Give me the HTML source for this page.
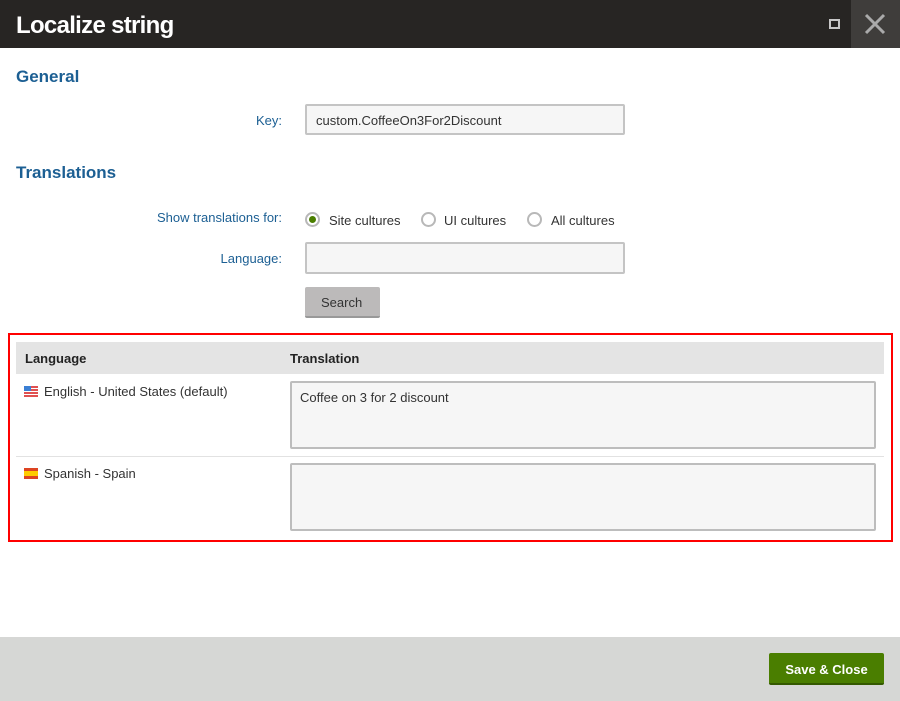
<!DOCTYPE html>
<html><head><meta charset="utf-8"><style>
*{margin:0;padding:0;box-sizing:border-box}
body{width:900px;height:701px;position:relative;background:#fff;font-family:"Liberation Sans",sans-serif;font-size:13px;color:#333;overflow:hidden}
.a{position:absolute}
.hdr{left:0;top:0;width:900px;height:48px;background:#272523}
.title{left:16px;top:12px;color:#fff;font-size:24px;font-weight:bold;letter-spacing:-0.7px}
.cls{left:851px;top:0;width:49px;height:48px;background:#3f3d3b}
.h2{color:#1c5f93;font-size:17px;font-weight:bold}
.lbl{color:#1c5f93;font-size:13px;text-align:right;width:200px}
.inp{background:#f6f6f6;border:2px solid #c4c4c4;border-radius:2px}
.rad{width:15px;height:15px;border:2px solid #b8b8b8;border-radius:50%;background:#fff}
.txt{font-size:13px;color:#333}
</style></head><body>
<div class="a hdr"></div>
<div class="a title">Localize string</div>
<div class="a" style="left:829px;top:19px;width:11px;height:10px;border:2px solid #c8c8c8"></div>
<div class="a cls"></div>
<svg class="a" style="left:864px;top:13px" width="22" height="22"><path d="M2 2L20 20M20 2L2 20" stroke="#aaa" stroke-width="3"/></svg>

<div class="a h2" style="left:16px;top:67px">General</div>
<div class="a lbl" style="left:82px;top:113px">Key:</div>
<div class="a inp" style="left:305px;top:104px;width:320px;height:31px"></div>
<div class="a txt" style="left:316px;top:113px">custom.CoffeeOn3For2Discount</div>

<div class="a h2" style="left:16px;top:163px">Translations</div>
<div class="a lbl" style="left:82px;top:210px">Show translations for:</div>
<div class="a rad" style="left:305px;top:212px"></div>
<div class="a" style="left:309px;top:216px;width:7px;height:7px;border-radius:50%;background:#4a7e00"></div>
<div class="a txt" style="left:329px;top:213px">Site cultures</div>
<div class="a rad" style="left:421px;top:212px"></div>
<div class="a txt" style="left:444px;top:213px">UI cultures</div>
<div class="a rad" style="left:527px;top:212px"></div>
<div class="a txt" style="left:551px;top:213px">All cultures</div>
<div class="a lbl" style="left:82px;top:251px">Language:</div>
<div class="a inp" style="left:305px;top:242px;width:320px;height:32px"></div>
<div class="a" style="left:305px;top:287px;width:75px;height:31px;background:#bcbaba;border-bottom:2px solid #999;border-radius:2px"></div>
<div class="a txt" style="left:321px;top:295px">Search</div>

<div class="a" style="left:8px;top:333px;width:885px;height:209px;border:2px solid #f00"></div>
<div class="a" style="left:16px;top:342px;width:868px;height:32px;background:#e4e4e4"></div>
<div class="a txt" style="left:25px;top:351px;font-weight:bold;color:#222">Language</div>
<div class="a txt" style="left:290px;top:351px;font-weight:bold;color:#222">Translation</div>
<div class="a" style="left:24px;top:386px;width:14px;height:11px;background:repeating-linear-gradient(#e05050 0 2px,#fff 2px 3px)"></div>
<div class="a" style="left:24px;top:386px;width:7px;height:5px;background:#3b7fd4"></div>
<div class="a txt" style="left:44px;top:384px">English - United States (default)</div>
<div class="a inp" style="left:290px;top:381px;width:586px;height:68px;border-color:#bdbdbd"></div>
<div class="a txt" style="left:300px;top:390px">Coffee on 3 for 2 discount</div>
<div class="a" style="left:16px;top:456px;width:868px;height:1px;background:#e2e2e2"></div>
<div class="a" style="left:24px;top:468px;width:14px;height:11px;background:linear-gradient(#d42 0 3px,#fc0 3px 8px,#d42 8px)"></div>
<div class="a txt" style="left:44px;top:466px">Spanish - Spain</div>
<div class="a inp" style="left:290px;top:463px;width:586px;height:68px;border-color:#bdbdbd"></div>

<div class="a" style="left:0;top:637px;width:900px;height:64px;background:#d6d7d5"></div>
<div class="a" style="left:769px;top:653px;width:115px;height:32px;background:#4a7e00;border-bottom:2px solid #345900;border-radius:2px"></div>
<div class="a" style="left:769px;top:662px;width:115px;text-align:center;color:#fff;font-weight:bold;font-size:13px">Save &amp; Close</div>
</body></html>
